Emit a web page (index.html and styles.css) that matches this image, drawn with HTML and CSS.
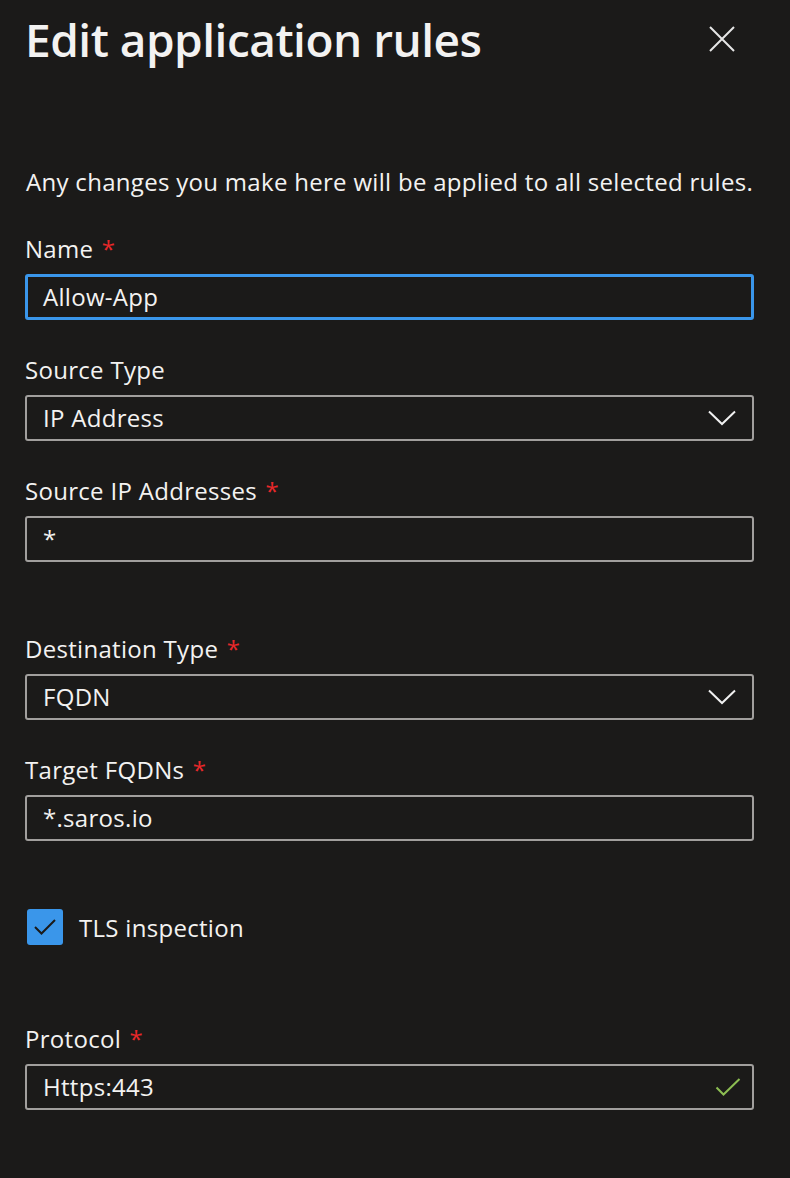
FILE: index.html
```html
<!DOCTYPE html>
<html lang="en">
<head>
<meta charset="utf-8">
<title>Edit application rules</title>
<link rel="stylesheet" href="styles.css">
</head>
<body>
<div class="panel">
  <header class="header">
    <h1 class="title">Edit application rules</h1>
    <button class="close" aria-label="Close">
      <svg width="26" height="26" viewBox="0 0 26 26"><path d="M1 1 L25 25 M25 1 L1 25" stroke="#e6e6e6" stroke-width="2" fill="none"/></svg>
    </button>
  </header>

  <p class="desc">Any changes you make here will be applied to all selected rules.</p>

  <div class="field">
    <label class="label">Name <span class="req">*</span></label>
    <div class="input focused">Allow-App</div>
  </div>

  <div class="field">
    <label class="label">Source Type</label>
    <div class="input select">IP Address
      <svg class="chev" width="28" height="16" viewBox="0 0 28 16"><path d="M1 1.5 L14 14 L27 1.5" stroke="#f0f0f0" stroke-width="2" fill="none"/></svg>
    </div>
  </div>

  <div class="field">
    <label class="label">Source IP Addresses <span class="req">*</span></label>
    <div class="input">*</div>
  </div>

  <div class="field field-gap">
    <label class="label">Destination Type <span class="req">*</span></label>
    <div class="input select">FQDN
      <svg class="chev" width="28" height="16" viewBox="0 0 28 16"><path d="M1 1.5 L14 14 L27 1.5" stroke="#f0f0f0" stroke-width="2" fill="none"/></svg>
    </div>
  </div>

  <div class="field">
    <label class="label">Target FQDNs <span class="req">*</span></label>
    <div class="input">*.saros.io</div>
  </div>

  <div class="check-row">
    <span class="checkbox">
      <svg width="24" height="18" viewBox="0 0 24 18"><path d="M2 9 L8.5 15.5 L22 2" stroke="#1b1a19" stroke-width="2" fill="none"/></svg>
    </span>
    <span class="check-label">TLS inspection</span>
  </div>

  <div class="field field-protocol">
    <label class="label">Protocol <span class="req">*</span></label>
    <div class="input select">Https:443
      <svg class="ok" width="26" height="18" viewBox="0 0 26 18"><path d="M1.5 9.5 L8.5 16.5 L24.5 1" stroke="#8cbd52" stroke-width="2" fill="none"/></svg>
    </div>
  </div>
</div>
</body>
</html>
```

FILE: styles.css
```css
html, body {
  margin: 0;
  padding: 0;
  background: #1b1a19;
}

body {
  font-family: "Open Sans", "Noto Sans", "Liberation Sans", sans-serif;
  color: #ffffff;
}

.panel {
  padding: 0 36px 0 25px;
}

.header {
  display: flex;
  align-items: center;
  justify-content: space-between;
  height: 80px;
}

.title {
  margin: 0;
  font-size: 46px;
  font-weight: 600;
  line-height: 80px;
  margin-top: -2px;
  letter-spacing: -0.5px;
  color: #f3f2f1;
}

.close {
  background: none;
  border: 0;
  padding: 0;
  margin-right: 19px;
  margin-top: -2px;
  width: 26px;
  height: 26px;
  display: flex;
}

.desc {
  margin: 85px 0 0 1px;
  font-size: 24px;
  line-height: 34px;
  letter-spacing: 0.3px;
  color: #f3f2f1;
}

.field {
  margin-top: 33px;
}

.field-gap {
  margin-top: 70px;
}

.label {
  display: block;
  font-size: 24px;
  line-height: 34px;
  letter-spacing: 0.3px;
  color: #f3f2f1;
}

.req {
  color: #e8282a;
  margin-left: 2px;
}

.input {
  position: relative;
  box-sizing: border-box;
  margin-top: 8px;
  height: 46px;
  border: 2px solid #a19f9d;
  border-radius: 3px;
  padding: 0 0 0 16px;
  font-size: 24px;
  line-height: 41px;
  letter-spacing: 0.3px;
  color: #f3f2f1;
}

.input.focused {
  border: 3px solid #3a96ea;
  line-height: 39px;
  padding-left: 15px;
}

.chev {
  position: absolute;
  right: 16px;
  top: 13px;
}

.ok {
  position: absolute;
  right: 11px;
  top: 12px;
}

.check-row {
  display: flex;
  align-items: center;
  margin-top: 68px;
  margin-left: 2px;
  height: 36px;
}

.checkbox {
  box-sizing: border-box;
  width: 36px;
  height: 36px;
  border-radius: 3px;
  background: #3a96ea;
  display: flex;
  align-items: center;
  justify-content: center;
}

.check-label {
  margin-left: 16px;
  font-size: 24px;
  letter-spacing: 0.3px;
  color: #f3f2f1;
}

.field-protocol {
  margin-top: 77px;
}
```
